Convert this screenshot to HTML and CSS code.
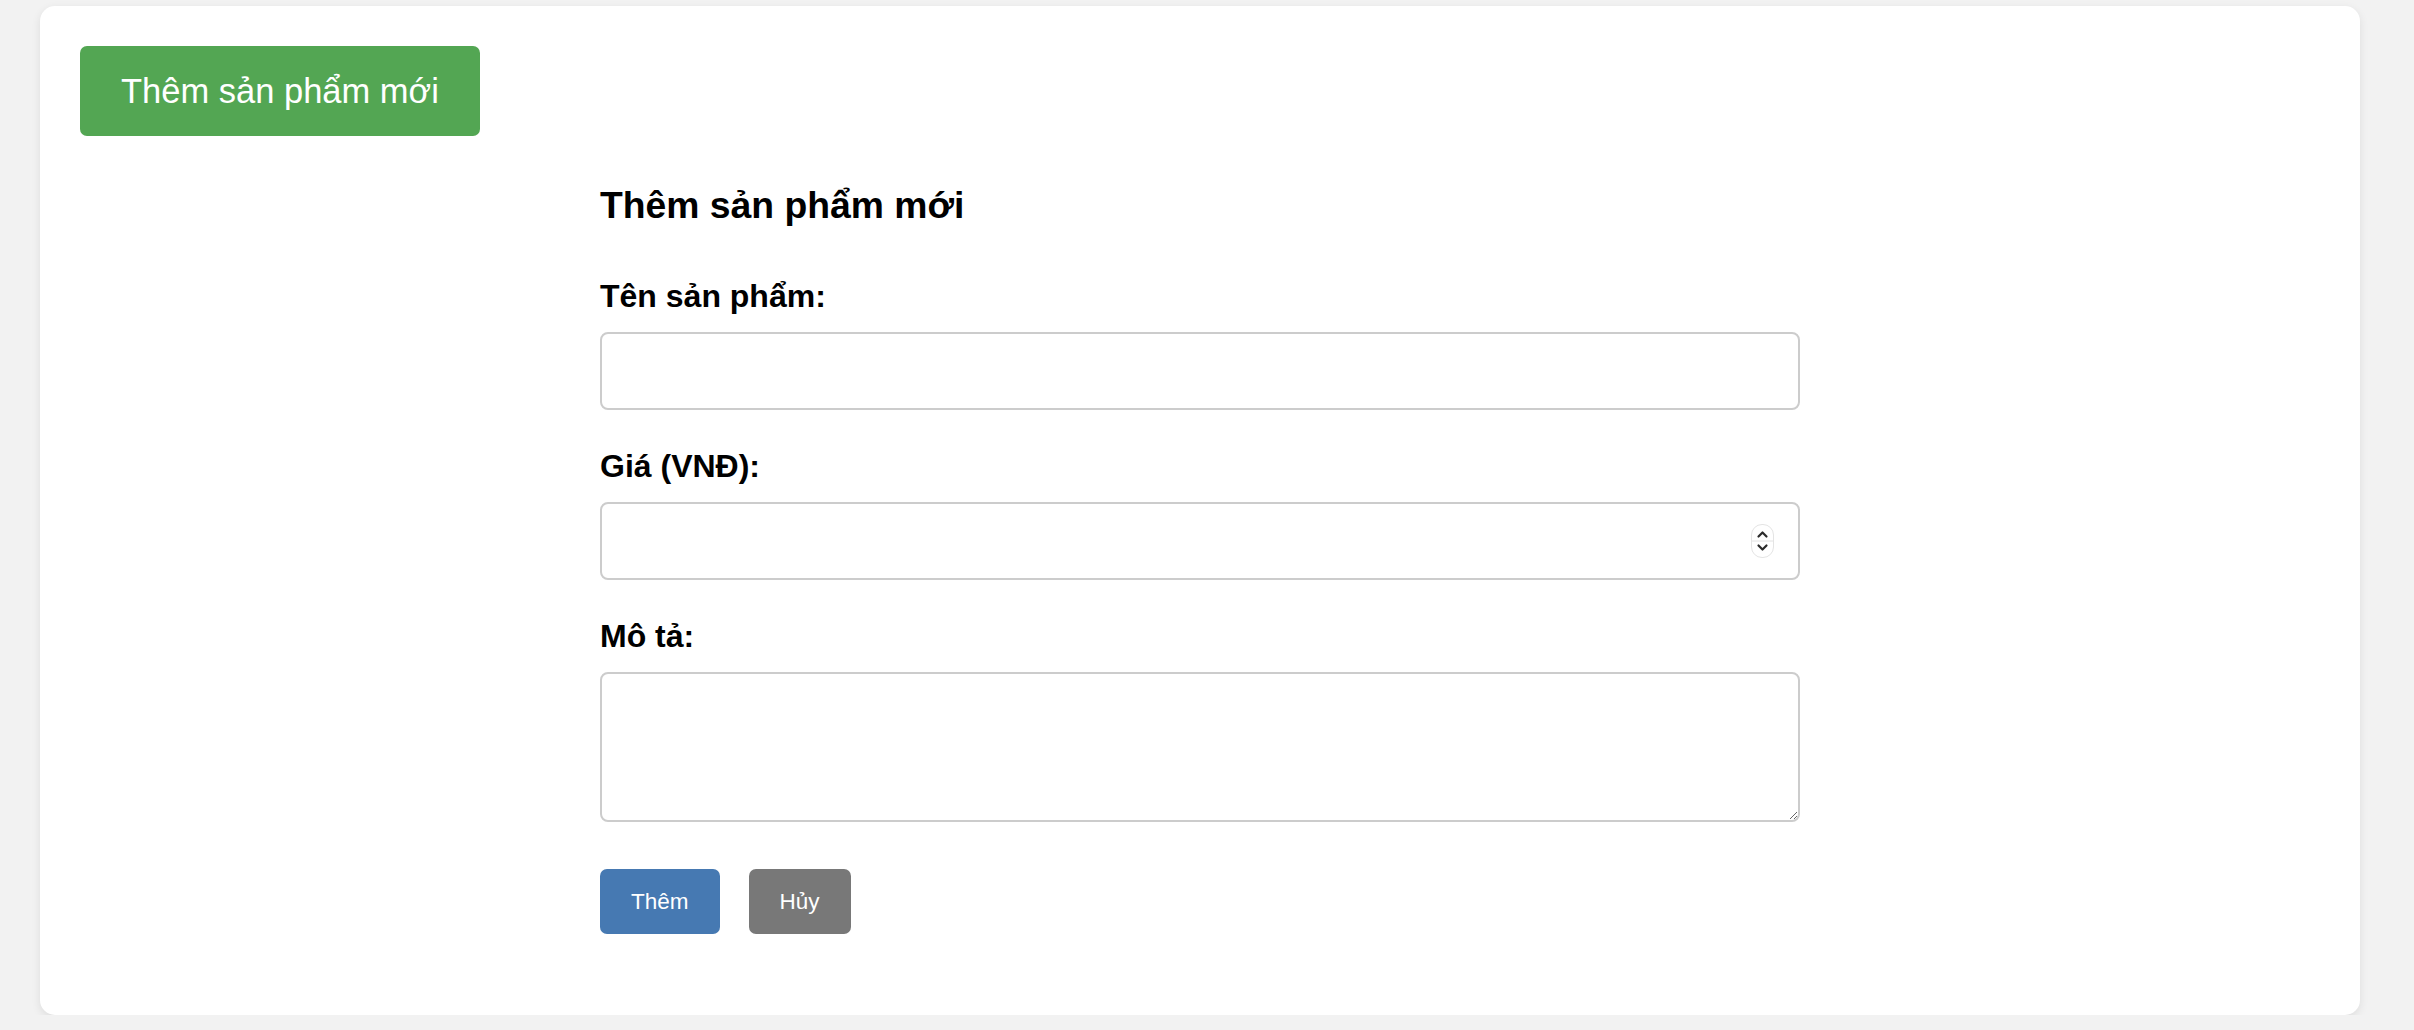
FILE: index.html
```html
<!DOCTYPE html>
<html lang="vi">
<head>
<meta charset="utf-8">
<title>Thêm sản phẩm mới</title>
<link rel="stylesheet" href="styles.css">
</head>
<body>
<div class="card">
  <button class="btn-add-new" type="button">Thêm sản phẩm mới</button>
  <form class="product-form">
    <h3 class="form-title">Thêm sản phẩm mới</h3>
    <div class="field">
      <label class="field-label" for="name">Tên sản phẩm:</label>
      <input class="field-input" id="name" type="text">
    </div>
    <div class="field">
      <label class="field-label" for="price">Giá (VNĐ):</label>
      <div class="number-wrap">
        <input class="field-input" id="price" type="number">
        <span class="spinner" aria-hidden="true">
          <svg class="chev" width="23" height="34" viewBox="0 0 23 34">
            <path d="M7.5 12.5 L11.5 8.5 L15.5 12.5" fill="none" stroke="#2a2a2a" stroke-width="2.2" stroke-linecap="round" stroke-linejoin="round"/>
            <line x1="1" y1="17" x2="22" y2="17" stroke="#e2e2e2" stroke-width="1"/>
            <path d="M7.5 21.5 L11.5 25.5 L15.5 21.5" fill="none" stroke="#2a2a2a" stroke-width="2.2" stroke-linecap="round" stroke-linejoin="round"/>
          </svg>
        </span>
      </div>
    </div>
    <div class="field">
      <label class="field-label" for="desc">Mô tả:</label>
      <textarea class="field-input field-textarea" id="desc"></textarea>
    </div>
    <div class="actions">
      <button class="btn btn-submit" type="button">Thêm</button>
      <button class="btn btn-cancel" type="button">Hủy</button>
    </div>
  </form>
</div>
</body>
</html>
```
FILE: styles.css
```css
html, body {
  margin: 0;
  background: #f2f2f2;
}
body {
  padding: 6px 54px 0 40px;
  font-family: "Liberation Sans", Arial, Helvetica, sans-serif;
  color: #000;
}
.card {
  background: #fff;
  border-radius: 15px;
  padding: 40px 40px 40px 40px;
  box-shadow: 0 3px 10px rgba(0, 0, 0, 0.09);
}
.btn-add-new {
  display: block;
  height: 90px;
  padding: 0 41px;
  border: none;
  border-radius: 7px;
  background: #53a653;
  color: #fff;
  font-family: "Liberation Sans", Arial, Helvetica, sans-serif;
  font-size: 34.5px;
  line-height: 90px;
}
.product-form {
  width: 1200px;
  margin: 48px auto 0;
  padding-bottom: 41px;
}
.form-title {
  margin: 0 0 52px;
  font-size: 37.3px;
  line-height: 42px;
  font-weight: bold;
}
.field {
  margin-bottom: 38px;
}
.field-label {
  display: block;
  font-size: 32px;
  line-height: 36px;
  font-weight: bold;
  margin-bottom: 18px;
}
.field-input {
  display: block;
  box-sizing: border-box;
  width: 100%;
  height: 78px;
  margin: 0;
  border: 2px solid #cccccc;
  border-radius: 8px;
  background: #fff;
  font-family: "Liberation Sans", Arial, Helvetica, sans-serif;
  font-size: 28px;
  padding: 0 20px;
}
.field-textarea {
  height: 150px;
  padding: 16px 20px;
  resize: vertical;
}
.number-wrap {
  position: relative;
}
.field-input[type="number"] {
  -moz-appearance: textfield;
}
.field-input[type="number"]::-webkit-inner-spin-button,
.field-input[type="number"]::-webkit-outer-spin-button {
  -webkit-appearance: none;
  margin: 0;
}
.spinner {
  position: absolute;
  right: 26px;
  top: 22px;
  width: 23px;
  height: 34px;
  box-sizing: border-box;
  border: 1px solid #e4e4e4;
  border-radius: 11px;
  background: #fff;
  overflow: hidden;
}
.chev {
  display: block;
  position: absolute;
  left: -1px;
  top: -1px;
}
.actions {
  display: flex;
  gap: 29px;
  margin-top: 47px;
}
.field:last-of-type {
  margin-bottom: 0;
}
.btn {
  height: 65px;
  padding: 0 31px;
  border: none;
  border-radius: 7px;
  color: #fff;
  font-family: "Liberation Sans", Arial, Helvetica, sans-serif;
  font-size: 22.5px;
  line-height: 66px;
}
.btn-submit {
  background: #4679b2;
}
.btn-cancel {
  background: #787878;
}
```
